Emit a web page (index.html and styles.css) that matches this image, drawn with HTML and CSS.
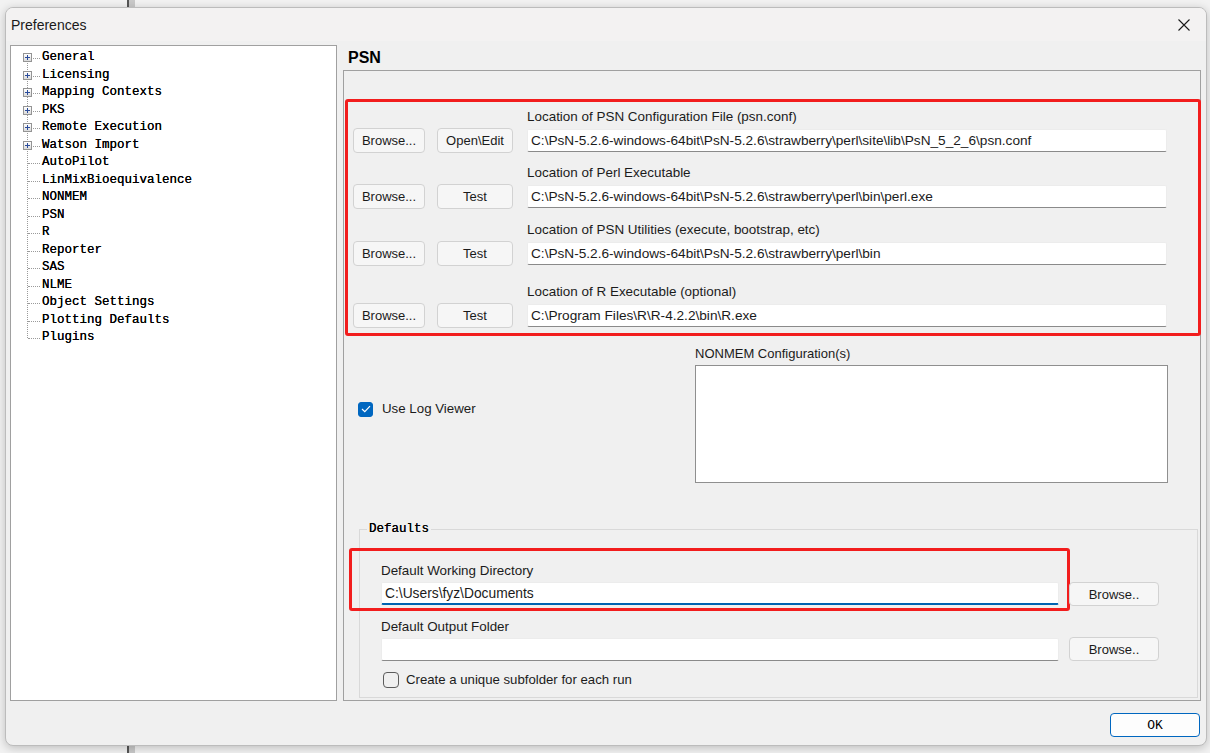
FILE: index.html
```html
<!DOCTYPE html>
<html>
<head>
    <title>Preferences</title>
    <link rel="stylesheet" href="styles.css">
</head>
<body>
    <div class="dialog">
        <div class="titlebar">
            <span class="title">Preferences</span>
            <button class="close" type="button" aria-label="Close">
                <svg width="12" height="12" viewBox="0 0 12 12"><path d="M0.5 0.5 L11.5 11.5 M11.5 0.5 L0.5 11.5" stroke="#1a1a1a" stroke-width="1.1" fill="none"/></svg>
            </button>
        </div>

        <div class="content">
            <div class="tree">
                <ul>
                    <li class="node"><span class="plus"><svg width="9" height="9" viewBox="0 0 9 9"><path d="M2 4.5 H7 M4.5 2 V7" stroke="#2b4c9b" stroke-width="1"/></svg></span>General</li>
                    <li class="node"><span class="plus"><svg width="9" height="9" viewBox="0 0 9 9"><path d="M2 4.5 H7 M4.5 2 V7" stroke="#2b4c9b" stroke-width="1"/></svg></span>Licensing</li>
                    <li class="node"><span class="plus"><svg width="9" height="9" viewBox="0 0 9 9"><path d="M2 4.5 H7 M4.5 2 V7" stroke="#2b4c9b" stroke-width="1"/></svg></span>Mapping Contexts</li>
                    <li class="node"><span class="plus"><svg width="9" height="9" viewBox="0 0 9 9"><path d="M2 4.5 H7 M4.5 2 V7" stroke="#2b4c9b" stroke-width="1"/></svg></span>PKS</li>
                    <li class="node"><span class="plus"><svg width="9" height="9" viewBox="0 0 9 9"><path d="M2 4.5 H7 M4.5 2 V7" stroke="#2b4c9b" stroke-width="1"/></svg></span>Remote Execution</li>
                    <li class="node"><span class="plus"><svg width="9" height="9" viewBox="0 0 9 9"><path d="M2 4.5 H7 M4.5 2 V7" stroke="#2b4c9b" stroke-width="1"/></svg></span>Watson Import</li>
                    <li>AutoPilot</li>
                    <li>LinMixBioequivalence</li>
                    <li>NONMEM</li>
                    <li>PSN</li>
                    <li>R</li>
                    <li>Reporter</li>
                    <li>SAS</li>
                    <li>NLME</li>
                    <li>Object Settings</li>
                    <li>Plotting Defaults</li>
                    <li>Plugins</li>
                </ul>
            </div>

            <div class="page">
                <h2>PSN</h2>
                <div class="panel">
                    <div class="mark paths">
                        <div class="path-row">
                            <div class="actions">
                                <button class="btn browse" type="button">Browse...</button>
                                <button class="btn action" type="button">Open\Edit</button>
                            </div>
                            <div class="field">
                                <label for="conf">Location of PSN Configuration File (psn.conf)</label>
                                <input type="text" id="conf" value="C:\PsN-5.2.6-windows-64bit\PsN-5.2.6\strawberry\perl\site\lib\PsN_5_2_6\psn.conf">
                            </div>
                        </div>
                        <div class="path-row">
                            <div class="actions">
                                <button class="btn browse" type="button">Browse...</button>
                                <button class="btn action" type="button">Test</button>
                            </div>
                            <div class="field">
                                <label for="perl">Location of Perl Executable</label>
                                <input type="text" id="perl" value="C:\PsN-5.2.6-windows-64bit\PsN-5.2.6\strawberry\perl\bin\perl.exe">
                            </div>
                        </div>
                        <div class="path-row">
                            <div class="actions">
                                <button class="btn browse" type="button">Browse...</button>
                                <button class="btn action" type="button">Test</button>
                            </div>
                            <div class="field">
                                <label for="utils">Location of PSN Utilities (execute, bootstrap, etc)</label>
                                <input type="text" id="utils" value="C:\PsN-5.2.6-windows-64bit\PsN-5.2.6\strawberry\perl\bin">
                            </div>
                        </div>
                        <div class="path-row">
                            <div class="actions">
                                <button class="btn browse" type="button">Browse...</button>
                                <button class="btn action" type="button">Test</button>
                            </div>
                            <div class="field">
                                <label for="rexe">Location of R Executable (optional)</label>
                                <input type="text" id="rexe" value="C:\Program Files\R\R-4.2.2\bin\R.exe">
                            </div>
                        </div>
                    </div>

                    <div class="middle">
                        <div class="log">
                            <label class="check">
                                <span class="box checked"><svg width="10" height="8" viewBox="0 0 10 8"><path d="M1 4 L3.8 6.6 L9 1.2" stroke="#fff" stroke-width="1.2" fill="none"/></svg></span>
                                Use Log Viewer
                            </label>
                        </div>
                        <div class="configs">
                            <label for="configs">NONMEM Configuration(s)</label>
                            <textarea id="configs"></textarea>
                        </div>
                    </div>

                    <fieldset class="defaults">
                        <legend>Defaults</legend>
                        <div class="dir-row">
                            <div class="mark dir-mark">
                                <label for="workdir">Default Working Directory</label>
                                <input type="text" id="workdir" class="focused" value="C:\Users\fyz\Documents">
                            </div>
                            <button class="btn dir-browse first" type="button">Browse..</button>
                        </div>
                        <div class="dir-row">
                            <div class="dir-field">
                                <label for="outdir">Default Output Folder</label>
                                <input type="text" id="outdir">
                            </div>
                            <button class="btn dir-browse" type="button">Browse..</button>
                        </div>
                        <label class="check unique">
                            <span class="box"></span>
                            Create a unique subfolder for each run
                        </label>
                    </fieldset>
                </div>
            </div>
        </div>

        <div class="footer">
            <button class="ok" type="button">OK</button>
        </div>
    </div>
</body>
</html>
```

FILE: styles.css
```css
html, body {
    margin: 0;
}
body {
    width: 1210px;
    height: 753px;
    overflow: hidden;
    box-sizing: border-box;
    padding: 7px 3px 0 5px;
    font-family: "Liberation Sans", Arial, sans-serif;
    font-size: 13px;
    color: #1b1b1b;
    /* desktop behind the dialog */
    background: linear-gradient(to right, #f2f2f2 127px, #555 127px, #555 129px, #c9c9c9 129px, #c9c9c9 135px, #f2f2f2 135px);
}

.dialog {
    width: 1202px;
    height: 739px;
    box-sizing: border-box;
    background-color: #f0f0f0;
    border: 1px solid #bcbcbc;
    border-radius: 8px;
    box-shadow: 0 2px 10px rgba(0, 0, 0, 0.22);
    display: flex;
    flex-direction: column;
    overflow: hidden;
}

/* title bar */
.titlebar {
    height: 33px;
    flex: none;
    display: flex;
    align-items: center;
    justify-content: space-between;
    padding-left: 5px;
    background-color: #f3f2f2;
}
.title {
    font-size: 14px;
    color: #1a1a1a;
}
.close {
    width: 44px;
    height: 33px;
    border: none;
    background: transparent;
    display: flex;
    align-items: center;
    justify-content: center;
    padding: 0;
}

.content {
    display: flex;
    gap: 6px;
    height: 656px;
    margin-top: 4px;
    padding: 0 5px 0 4px;
    flex: none;
}

/* navigation tree */
.tree {
    width: 327px;
    flex: none;
    box-sizing: border-box;
    background-color: #fff;
    border: 1px solid #a0a0a0;
}
.tree ul {
    position: relative;
    list-style: none;
    margin: 0;
    padding: 3px 0 0 0;
    font-family: "Liberation Mono", "DejaVu Sans Mono", monospace;
    font-size: 12.5px;
    color: #000;
    text-shadow: 0 0 0.2px #000;
}
.tree ul::before {
    content: "";
    position: absolute;
    left: 16px;
    top: 12px;
    height: 280px;
    border-left: 1px dotted #9a9a9a;
}
.tree li {
    position: relative;
    height: 17.5px;
    line-height: 17.5px;
    padding-left: 31px;
    white-space: pre;
}
.tree li::before {
    content: "";
    position: absolute;
    left: 17px;
    top: 9px;
    width: 12px;
    border-top: 1px dotted #9a9a9a;
}
.plus {
    position: absolute;
    left: 12px;
    top: 4px;
    width: 9px;
    height: 9px;
    box-sizing: border-box;
    border: 1px solid #949494;
    background: linear-gradient(#ffffff, #dadada);
    z-index: 1;
}
.plus svg {
    position: absolute;
    left: -1px;
    top: -1px;
}

/* right side page */
.page {
    width: 858px;
    flex: none;
    display: flex;
    flex-direction: column;
}
.page h2 {
    margin: 0;
    height: 25px;
    line-height: 26px;
    padding-left: 5px;
    font-size: 16px;
    font-weight: bold;
    color: #000;
}
.panel {
    flex: 1;
    box-sizing: border-box;
    border: 1px solid #a0a0a0;
    display: flex;
    flex-direction: column;
}

/* red highlight frame */
.mark {
    border: 3px solid #f21d1d;
    border-radius: 3px;
}

.paths {
    margin: 28px -1px 0 1px;
    padding: 7px 0 6px 5px;
}
.path-row {
    display: flex;
    align-items: flex-end;
}
.path-row + .path-row {
    margin-top: 13px;
}
.path-row:nth-child(3) {
    margin-top: 14px;
}
.path-row:nth-child(4) {
    margin-top: 19px;
}
.actions {
    display: flex;
    gap: 12px;
    width: 174px;
    flex: none;
    margin-bottom: -1px;
}

.btn {
    height: 25px;
    box-sizing: border-box;
    padding: 0;
    font-family: "Liberation Sans", Arial, sans-serif;
    font-size: 13px;
    color: #1b1b1b;
    background-color: #f6f6f6;
    border: 1px solid #d2d2d2;
    border-radius: 4px;
}
.browse {
    width: 72px;
}
.action {
    width: 76px;
}

.field {
    width: 640px;
}
.field label {
    font-size: 13.45px;
}
.field input[type="text"] {
    font-size: 13.65px;
}
label {
    display: block;
    line-height: 15px;
    margin-bottom: 5px;
}
input[type="text"] {
    display: block;
    width: 100%;
    height: 23px;
    box-sizing: border-box;
    padding: 0 3px;
    font-family: "Liberation Sans", Arial, sans-serif;
    font-size: 13px;
    color: #1b1b1b;
    background-color: #fff;
    border: 1px solid #ececec;
    border-bottom-color: #8a8a8a;
    border-radius: 2px;
    outline: none;
}
input.focused {
    border-bottom: 2px solid #0063b1;
}

/* checkbox + configurations */
.middle {
    display: flex;
    margin-top: 10px;
}
.log {
    width: 337px;
    padding-left: 14px;
    flex: none;
}
.log .check {
    margin-top: 55px;
    font-size: 13.3px;
}
.check {
    display: flex;
    align-items: center;
    gap: 9px;
    margin-bottom: 0;
    line-height: 16px;
}
.box {
    width: 15px;
    height: 15px;
    box-sizing: border-box;
    border: 1px solid #5c5c5c;
    border-radius: 3px;
    display: flex;
    align-items: center;
    justify-content: center;
    flex: none;
}
.box.checked {
    background-color: #0067c0;
    border-color: #0067c0;
}
.configs label {
    margin-bottom: 4px;
}
.configs textarea {
    display: block;
    width: 473px;
    height: 118px;
    box-sizing: border-box;
    margin: 0;
    resize: none;
    background-color: #fff;
    border: 1px solid #8f8f8f;
}

/* defaults group */
.defaults {
    margin: 39px 2px 2px 15px;
    padding: 11px 0 9px 0;
    border: 1px solid #d9d9d9;
    min-width: 0;
}
.defaults legend {
    margin-left: 7px;
    padding: 0 2px;
    line-height: 15px;
    font-family: "Liberation Mono", "DejaVu Sans Mono", monospace;
    font-size: 12.5px;
    color: #000;
    text-shadow: 0 0 0.2px #000;
}
.dir-row {
    display: flex;
    align-items: flex-end;
}
.dir-mark {
    width: 721px;
    box-sizing: border-box;
    margin-left: -11px;
    padding: 12px 8px 3px 29px;
}
.dir-mark label,
.dir-field label {
    margin-bottom: 4px;
    font-size: 13.4px;
}
.dir-mark input[type="text"],
.dir-field input[type="text"] {
    font-size: 13.8px;
}
.dir-field {
    width: 678px;
    margin: 8px 0 0 21px;
}
.dir-browse {
    width: 90px;
    height: 24px;
    margin-left: 10px;
}
.dir-browse.first {
    margin-left: -1px;
    margin-bottom: 5px;
}
.unique {
    margin: 11px 0 0 23px;
    gap: 7px;
    font-size: 13.2px;
}
.unique .box {
    width: 16px;
    height: 16px;
    border-radius: 4px;
}

/* footer */
.footer {
    flex: none;
    display: flex;
    justify-content: flex-end;
    padding: 12px 6px 8px 0;
}
.ok {
    width: 90px;
    height: 24px;
    padding: 0;
    font-family: "Liberation Mono", "DejaVu Sans Mono", monospace;
    font-size: 13px;
    color: #000;
    background-color: #fdfdfd;
    border: 1px solid #0067c0;
    border-radius: 4px;
}
```
